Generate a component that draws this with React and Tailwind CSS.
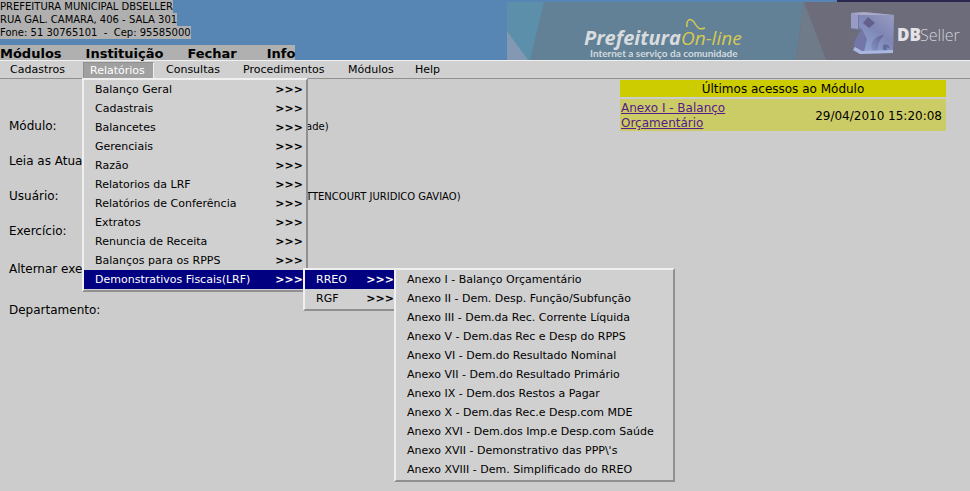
const addressLines = [
  'PREFEITURA MUNICIPAL DBSELLER',
  'RUA GAL. CAMARA, 406 - SALA 301',
  'Fone: 51 30765101  -  Cep: 95585000',
];

const reports = [
  'Balanço Geral',
  'Cadastrais',
  'Balancetes',
  'Gerenciais',
  'Razão',
  'Relatorios da LRF',
  'Relatórios de Conferência',
  'Extratos',
  'Renuncia de Receita',
  'Balanços para os RPPS',
  'Demonstrativos Fiscais(LRF)',
];

const annexes = [
  'Anexo I - Balanço Orçamentário',
  'Anexo II - Dem. Desp. Função/Subfunção',
  'Anexo III - Dem.da Rec. Corrente Líquida',
  'Anexo V - Dem.das Rec e Desp do RPPS',
  'Anexo VI - Dem.do Resultado Nominal',
  'Anexo VII - Dem.do Resultado Primário',
  'Anexo IX - Dem.dos Restos a Pagar',
  'Anexo X - Dem.das Rec.e Desp.com MDE',
  'Anexo XVI - Dem.dos Imp.e Desp.com Saúde',
  "Anexo XVII - Demonstrativo das PPP\\'s",
  'Anexo XVIII - Dem. Simplificado do RREO',
];

const raised =
  'absolute border-2 border-t-[#f0f0f0] border-l-[#f0f0f0] border-r-[#909090] border-b-[#909090] bg-[#d0d0d0] pb-px';

function MenuItem({ label, active, arrow }) {
  return (
    <button
      type="button"
      className={`flex h-[19px] w-full items-center justify-between whitespace-nowrap pl-[11px] pr-[3px] pt-0.5 text-left ${
        active ? 'bg-[#000080] text-white' : 'text-black'
      }`}
    >
      <span>{label}</span>
      {arrow && <span className="font-bold">&gt;&gt;&gt;</span>}
    </button>
  );
}

function Banner() {
  return (
    <svg className="h-[60px] w-[463px] shrink-0" viewBox="0 0 463 60" role="img" aria-label="Prefeitura On-line DBSeller">
      <defs>
        <linearGradient id="face" x1="1" y1="0" x2="0.2" y2="1">
          <stop offset="0" stopColor="#9a9dc2" />
          <stop offset="0.5" stopColor="#7e86b4" />
          <stop offset="1" stopColor="#8fa3d2" />
        </linearGradient>
        <linearGradient id="arc" x1="1" y1="0" x2="0" y2="1">
          <stop offset="0" stopColor="#5f638f" />
          <stop offset="1" stopColor="#8794c6" />
        </linearGradient>
      </defs>
      <rect x="330" y="0" width="133" height="2" fill="#2a264c" />
      <rect y="2" width="463" height="58" fill="#628196" />
      <path d="M0 2H37L23 60H0Z" fill="#5c8fa9" />
      <path d="M0 31L21 60H0Z" fill="#8298b3" />
      <path d="M297 2H463V60H289Z" fill="#6d6c7b" />
      <path d="M297 2L319 60H289Z" fill="#6f7b88" />
      <text x="77" y="45" fontFamily="'Open Sans', sans-serif" fontSize="20" fontWeight="700" fontStyle="italic" fill="#d9dcdf">Prefeitura</text>
      <text x="174" y="45" fontFamily="'Open Sans', sans-serif" fontSize="19" fontStyle="italic" fill="#d6c953">On-line</text>
      <path d="M180 27C179 20 183 17 187 22C191 29 193 30 198 28" fill="none" stroke="#d6c953" strokeWidth="1.5" />
      <text x="83" y="57" fontFamily="Lato, sans-serif" fontSize="10" fontWeight="700" fill="#d2d9de">Internet a serviço da comunidade</text>
      <path d="M344 13L357 12L387 15L386 53L353 54L346 50L348 40L354 30L344 29Z" fill="#7377a8" />
      <path d="M352 14L387 15L386 51L357 52L360 39L355 29L352 27Z" fill="url(#face)" />
      <path d="M344 13L351 14V29L344 28Z" fill="#989bc3" />
      <path d="M344 13L357 12L387 15L352 15Z" fill="#aaa9c6" />
      <path d="M361 17L368 23L362 28L356 23Z" fill="#655f8c" />
      <path d="M366 52C361 43 368 36 377 35C372 40 370 46 371 52Z" fill="url(#arc)" />
      <path d="M377 51C374 46 377 42 382 46L383 49L380 47L380 51Z" fill="#656b9c" />
      <path d="M346 50L353 54L386 53V50L355 51L348 47Z" fill="#abb9e2" />
      <text x="390" y="41" fontFamily="'Open Sans', sans-serif" fontSize="17" fontWeight="800" fill="#e4e4e8">DB</text>
      <text x="413" y="41" fontFamily="'Open Sans', sans-serif" fontSize="16" fontWeight="300" fill="#d0d0d8">Seller</text>
    </svg>
  );
}

function Field({ label, value, className }) {
  return (
    <div className={`flex items-center ${className}`}>
      <span className="w-[306px] shrink-0 whitespace-nowrap pl-[9px] text-xs">{label}</span>
      {value && <span className="whitespace-nowrap pt-0.5 text-[10px]">{value}</span>}
    </div>
  );
}

export default function App() {
  return (
    <div className="relative min-h-screen overflow-hidden bg-[#cccccc] font-['DejaVu_Sans',sans-serif] text-[11px] text-black">
      <header className="flex h-[60px] justify-between bg-[#5886b4]">
        <div className="flex flex-col justify-between">
          <div className="flex flex-col items-start text-[10px] leading-[13px]">
            {addressLines.map((line) => (
              <span key={line} className="whitespace-pre bg-[#b0b0b0]">{line}</span>
            ))}
          </div>
          <nav className="flex gap-6 self-start bg-[#b0b0b0] pt-0.5 text-[13px] font-bold leading-[13px]">
            <a href="#modulos">Módulos</a>
            <a href="#instituicao">Instituição</a>
            <a href="#fechar">Fechar</a>
            <a href="#info" className="pl-1.5">Info</a>
          </nav>
        </div>
        <Banner />
      </header>

      <nav className="flex h-[19px] items-center border-t border-b border-t-[#f0f0f0] border-b-[#909090] bg-[#d0d0d0]">
        <button type="button" className="w-[83px] pl-[10px] pt-0.5 text-left">Cadastros</button>
        <button type="button" className="h-4 w-[71px] border-t border-r border-l border-t-[#909090] border-r-[#f0f0f0] border-l-[#909090] bg-[#a0a0a0] pl-1.5 text-left text-white">Relatórios</button>
        <button type="button" className="ml-3 w-[77px] pt-0.5 text-left">Consultas</button>
        <button type="button" className="w-[105px] pt-0.5 text-left">Procedimentos</button>
        <button type="button" className="w-[67px] pt-0.5 text-left">Módulos</button>
        <button type="button" className="pt-0.5 text-left">Help</button>
      </nav>

      <main className="flex items-start justify-between">
        <div className="pt-[29px]">
          <Field className="h-[35px]" label="Módulo:" value="ade)" />
          <Field className="h-[35px]" label="Leia as Atua" />
          <Field className="h-[35px]" label="Usuário:" value="TTENCOURT JURIDICO GAVIAO)" />
          <Field className="h-[35px]" label="Exercício:" />
          <Field className="h-[41px]" label="Alternar exe" />
          <Field className="h-[41px]" label="Departamento:" />
        </div>
        <table className="mr-6 mt-px w-[326px] border-separate border-spacing-0 text-xs leading-[15px]">
          <thead>
            <tr>
              <th colSpan={2} className="h-[17px] bg-[#cccc00] p-0 pt-0.5 text-center font-normal">Últimos acessos ao Módulo</th>
            </tr>
          </thead>
          <tbody>
            <tr>
              <td className="w-[150px] border-t-2 border-[#cccccc] bg-[#cccc66] px-px pt-0.5">
                <a href="#anexo1" className="text-[#551a8b] underline">Anexo I - Balanço Orçamentário</a>
              </td>
              <td className="border-t-2 border-[#cccccc] bg-[#cccc66] pr-1 pt-0.5 text-right">29/04/2010 15:20:08</td>
            </tr>
          </tbody>
        </table>
      </main>

      <div className={`${raised} left-[82px] top-[78px] w-[226px]`}>
        {reports.map((label, i) => (
          <MenuItem key={label} label={label} arrow active={i === 10} />
        ))}
      </div>
      <div className={`${raised} left-[303px] top-[268px] w-[96px]`}>
        <MenuItem label="RREO" arrow active />
        <MenuItem label="RGF" arrow />
      </div>
      <div className={`${raised} left-[394px] top-[268px] w-[281px]`}>
        {annexes.map((label) => (
          <MenuItem key={label} label={label} />
        ))}
      </div>
    </div>
  );
}
